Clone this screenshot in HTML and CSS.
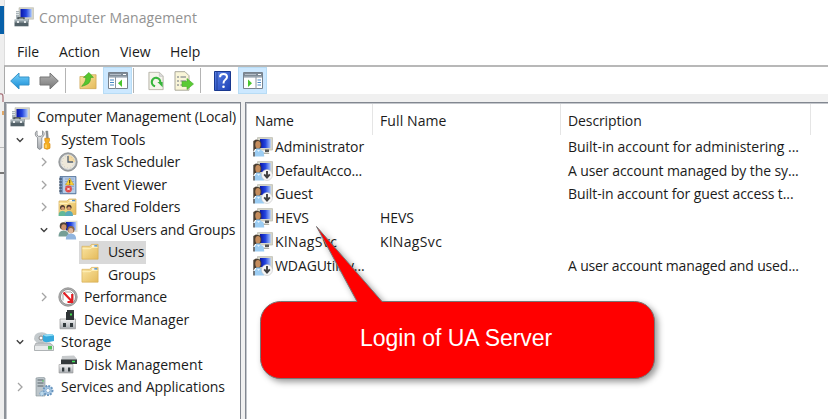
FILE: index.html
```html
<!DOCTYPE html>
<html lang="en">
<head>
<meta charset="utf-8">
<title>Computer Management</title>
<link rel="stylesheet" href="styles.css">
</head>
<body>
<svg class="defs" width="0" height="0">
  <defs>
    <linearGradient id="screen" x1="0" x2="1"><stop offset="0" stop-color="#0915a8"/><stop offset=".5" stop-color="#2345de"/><stop offset="1" stop-color="#a9c6ff"/></linearGradient>
    <linearGradient id="gold" x1="0" y1="0" x2="1" y2="1"><stop offset="0" stop-color="#fbe6a4"/><stop offset="1" stop-color="#e5bb5b"/></linearGradient>
    <linearGradient id="blueArrow" x1="0" y1="0" x2="0" y2="1"><stop offset="0" stop-color="#77d2fb"/><stop offset="1" stop-color="#168bd5"/></linearGradient>
    <linearGradient id="grayArrow" x1="0" y1="0" x2="0" y2="1"><stop offset="0" stop-color="#b5b5b5"/><stop offset="1" stop-color="#777"/></linearGradient>
    <linearGradient id="metal" x1="0" y1="0" x2="0" y2="1"><stop offset="0" stop-color="#f5f5f5"/><stop offset="1" stop-color="#a7abb0"/></linearGradient>
    <linearGradient id="help" x1="0" y1="0" x2="1" y2="1"><stop offset="0" stop-color="#5c83e8"/><stop offset="1" stop-color="#1c3fb4"/></linearGradient>
  </defs>
  <symbol id="computer" viewBox="0 0 20 20">
    <path d="M5 .7h14.5v11.5H5z" fill="#d5d5c9" stroke="#b8b8ae" stroke-width=".6"/>
    <path d="M6.5 2h11.2v8.3H6.5z" fill="url(#screen)"/>
    <path d="M2 4h3.7v8H2z" fill="#a9b3b8"/><path d="M2 5.5h3M2 7.5h3" stroke="#eff3f4" stroke-width=".8"/>
    <path d="M10 12h5v3h-5z" fill="#aaa"/>
    <path d="M4 12.8v-2h6v2" fill="none" stroke="#3d4649" stroke-width="1.3"/>
    <path d="M.5 12.5h14v3H.5z" fill="#8c999e"/><path d="M.5 15.3h14v4H.5z" fill="#526168"/>
    <path d="M1 13h13" stroke="#c6d0d3"/><path d="M3 15h2M10 15h2" stroke="#e6eaec" stroke-width="2"/>
  </symbol>
  <symbol id="user" viewBox="0 0 20 20">
    <path d="M4.500.6h15V13h-15z" fill="#d7d7ca" stroke="#b7b7ad" stroke-width=".7"/>
    <path d="M7 2h10.700v9H7z" fill="url(#screen)"/>
    <path d="M12 12.500h4v2.500h-4z" fill="#555"/><path d="M10 15.500h5.500l1 1.500H10z" fill="#b0b0a6"/>
    <path d="M.3 4 3 2.500 7 3.500 8.300 6v4l-1.500 2H2L.3 15z" fill="#4a3e31"/>
    <ellipse cx="4.900" cy="7.800" rx="2.600" ry="3.700" fill="#c58d5d"/>
    <path d="M3 11.500h4l1 1.600 2.500 1.300.8 5.100H1.500l.2-5L3 13z" fill="#9ccdf3"/><path d="m4 13 1.600 2L7 13" fill="#e5f5ff"/><path d="M.3 15h1.400v4.500H.3z" fill="#3e4144"/>
  </symbol>
  <symbol id="disabled" viewBox="0 0 20 20">
    <use href="#user"/>
    <circle cx="14" cy="14" r="5.5" fill="#f7f7f7" stroke="#bbb" stroke-width=".5"/>
    <path d="M14 10v6M11.200 13.400l2.800 3.200 2.800-3.200" fill="none" stroke="#3f3f3f" stroke-width="1.900"/>
  </symbol>
  <symbol id="folder" viewBox="0 0 20 20">
    <path d="M1 4h8l2-2h7v15.500H1z" fill="url(#gold)" stroke="#d6ae55" stroke-width=".7"/>
    <path d="M11.500 3h5v1.500h-5z" fill="#fff"/><path d="M14 2.800h3v1.500h-3z" fill="#4b91d1"/>
    <path d="M1.500 6.500h8l2-1.300h6" stroke="#fff1bb" fill="none"/>
  </symbol>
  <symbol id="tools" viewBox="0 0 20 20">
    <path d="M3 .9C.8 2 .4 5.800 3.600 7.600V18q2 2.800 4.200 0V7.600C11 5.800 10.600 2 8.500.9v4L7.200 6.300H4.300L3 5z" fill="url(#metal)" stroke="#85898d" stroke-width=".9"/>
    <path d="M11.800 1h2l.6 7.500h-2z" fill="#8b8f91" stroke="#707476" stroke-width=".4"/><path d="M10.800 8.300h4.700v2.500l-1 1.700 1.500 1.200v4.500q-3 2.200-5.800 0v-4.500l1.500-1.200-.9-1.700z" fill="#f6ae20" stroke="#d58a16" stroke-width=".7"/><path d="M12 14.500v3.500" stroke="#fff0a0"/>
  </symbol>
  <symbol id="clock" viewBox="0 0 20 20">
    <circle cx="10" cy="10" r="9.200" fill="#a1a4a6" stroke="#85898b" stroke-width=".8"/><circle cx="10" cy="10" r="7.200" fill="#eee8d9" stroke="#dfe2e2"/>
    <path d="M10 10V3a7 7 0 0 1 7 7z" fill="#f4d9a0"/><path d="M10 4v6h5" fill="none" stroke="#536273" stroke-width="1.300"/>
    <circle cx="10" cy="10" r="5.800" fill="none" stroke="#9aa2a5" stroke-width=".7" stroke-dasharray=".5 2.500"/>
  </symbol>
  <symbol id="event" viewBox="0 0 20 20">
    <path d="M2 1.500h16v17.300H2z" fill="#7897c0" stroke="#45678f" stroke-width=".7"/><path d="M5 2.200h12.300v15.800H5z" fill="#b8cde7"/>
    <path d="M7 4h9M7 6.500h9M7 9h9M7 11.500h9M7 14h9" stroke="#7e9ac2" stroke-width=".7"/><path d="M1 4h3M1 7h3M1 10h3M1 13h3M1 16h3" stroke="#39475b"/>
    <path d="m11.700 3 4.200 7H7.500z" fill="#ffd433" stroke="#bc9120" stroke-width=".5"/><path d="M11.700 5v3M11.700 8.500v1" stroke="#473b16"/>
    <circle cx="10.500" cy="14" r="3.400" fill="#df4a4a"/><path d="m9.300 12.800 2.400 2.400m0-2.400-2.400 2.400" stroke="#fff" stroke-width="1"/>
  </symbol>
  <symbol id="shared" viewBox="0 0 20 20">
    <use href="#folder"/><circle cx="4.500" cy="10.500" r="2.500" fill="#523c30"/><circle cx="4.800" cy="11.500" r="1.700" fill="#d09b72"/><path d="M.5 19q0-5 4-5t4 5z" fill="#62b899"/>
    <circle cx="11" cy="10.200" r="2.500" fill="#45342d"/><circle cx="11" cy="11.200" r="1.700" fill="#d69a70"/><path d="M7 19q0-5 4-5t4 5z" fill="#5aaabb"/>
  </symbol>
  <symbol id="groups" viewBox="0 0 20 20">
    <path d="M6.500.7h13V12h-13z" fill="#deded2"/><path d="M8 2h10v8.300H8z" fill="url(#screen)"/>
    <circle cx="5.500" cy="6" r="3.800" fill="#51443a"/><ellipse cx="5.800" cy="7.300" rx="2.500" ry="3" fill="#cf936b"/><path d="M.5 16.500q0-6 5-6t6 6z" fill="#759e96"/>
    <circle cx="13" cy="9.500" r="3.500" fill="#8b6545"/><ellipse cx="12.800" cy="10.700" rx="2.400" ry="2.800" fill="#dfb699"/><path d="M7.800 19.500q0-6 5.200-6t5.200 6z" fill="#91b5df"/>
  </symbol>
  <symbol id="performance" viewBox="0 0 20 20">
    <circle cx="10" cy="10" r="9.200" fill="#b0b0b0" stroke="#858585" stroke-width=".8"/><circle cx="10" cy="10" r="7.500" fill="#fff" stroke="#777" stroke-width=".7"/>
    <path d="M5 13.500V7l2-2h6l2 2v6.500" fill="none" stroke="#888" stroke-width=".8"/><path d="m5.500 5.500 8.500 9M14.200 7v8H9.500" fill="none" stroke="#e31d22" stroke-width="2.100"/>
  </symbol>
  <symbol id="device" viewBox="0 0 20 20">
    <path d="M9 0h7v12H9z" fill="#34393b"/><path d="M2 9h15.500v9.800H2z" fill="url(#metal)" stroke="#999" stroke-width=".7"/><path d="M8 2h8v8H8z" fill="#303537"/><path d="M12 3.500h2v2h-2z" fill="#40d84d"/><path d="M5 13h3v4H5zm7 0h3v4h-3z" fill="#333b3e"/>
  </symbol>
  <symbol id="storage" viewBox="0 0 20 20">
    <path d="M0 7q0-7 8-6.800Q14 .4 14 6q0 5-7 5.300Q1 11 0 7z" fill="#c3c9cc"/><circle cx="7" cy="6" r="2" fill="#fff" stroke="#888"/><path d="m9 3 9-1 2 1.500V9l-8 1.500-3-1.500z" fill="#36a9dc"/><path d="m9 3 9-1 2 1.500-8 1z" fill="#92ddf5"/>
    <path d="M2 11h14l3.500 3v4.500H.5V14z" fill="#c7cacc" stroke="#989da0" stroke-width=".7"/><path d="M1 14h18v4H1z" fill="#e8eaeb"/><path d="M14 14h4v3.500h-4z" fill="#53c35b"/>
  </symbol>
  <symbol id="disk" viewBox="0 0 20 20">
    <path d="m4 1 12-.5L19 4v4H3z" fill="#c7cacc"/><path d="M3 4.500h16V9H3z" fill="#33383a"/><path d="M14 6.500h3" stroke="#43e159" stroke-width="1.500"/><path d="M1 9.500h14V18H1z" fill="url(#metal)" stroke="#999" stroke-width=".6"/><path d="M4 12.500h2.300v4H4zm6 0h2.300v4H10z" fill="#333b3e"/>
  </symbol>
  <symbol id="services" viewBox="0 0 20 20">
    <path d="M2 1 8 0l3 1v18H2z" fill="#bcc5ca" stroke="#849096" stroke-width=".6"/><path d="M3.500 3h6M3.500 6h6M3.500 9h6" stroke="#59656b"/><path d="M8 4h2" stroke="#59c965"/>
    <circle cx="14" cy="13.500" r="4.500" fill="#a9c9e6" stroke="#6895be" stroke-width="2" stroke-dasharray="1.800 1.200"/><circle cx="14" cy="13.500" r="2" fill="#fff" stroke="#6895be" stroke-width=".6"/><circle cx="8" cy="16.500" r="2.200" fill="#bcd9eb" stroke="#6895be" stroke-dasharray="1 1"/>
  </symbol>
  <symbol id="panel" viewBox="0 0 20 17">
    <path d="M.5.5h19v16H.5z" fill="#fff" stroke="#78828d"/><path d="M1 1h18v4.500H1z" fill="#7f8b97"/><path d="M2 2.500h11M1 5h18" stroke="#c3ccd4" stroke-width=".8"/><path d="M15 2.500h3" stroke="#fff"/>
  </symbol>
  <symbol id="doc" viewBox="0 0 18 20">
    <path d="M1 .7h11l4 4v14.500H1z" fill="#f4f4ea" stroke="#aaa89b" stroke-width=".9"/><path d="M12 1v4h4" fill="#ddd" stroke="#bbb" stroke-width=".7"/>
  </symbol>
  <symbol id="right" viewBox="0 0 8 10"><path d="m2 1 4 4-4 4" fill="none" stroke="#a4a4a4" stroke-width="1.300"/></symbol>
  <symbol id="down" viewBox="0 0 8 10"><path d="m.8 3.200 3.200 3.200 3.200-3.200" fill="none" stroke="#404040" stroke-width="1.400"/></symbol>
</svg>

<div class="desktop">
  <div class="behind">
    <div class="blue"></div>
    <svg class="fragment" viewBox="0 0 4 113"><path d="M0 60q3-1 3 3v5" fill="none" stroke="#a46d75" stroke-width="1.200"/><path d="M2 77h2v4H2z" fill="#e0a868"/></svg>
    <div class="rule"></div><div class="rule dark"></div>
  </div>
  <div class="window">
    <header class="titlebar"><svg><use href="#computer"/></svg><span>Computer Management</span></header>
    <nav class="menu"><span class="file">File</span><span class="action">Action</span><span class="view">View</span><span>Help</span></nav>
    <div class="toolbar">
      <svg class="arrow" viewBox="0 0 20 18"><path d="M.7 9 9 1v4h10v8H9v4z" fill="url(#blueArrow)" stroke="#3793c8"/></svg>
      <svg class="arrow next" viewBox="0 0 20 18"><path d="M19.300 9 11 1v4H1v8h10v4z" fill="url(#grayArrow)" stroke="#777"/></svg>
      <i class="sep first"></i>
      <svg class="up" viewBox="0 0 20 20"><path d="M1 5h7l2-2h9v15.500H1z" fill="url(#gold)" stroke="#c99e48" stroke-width=".7"/><path d="M3 16C4.500 13 7.500 12 7.500 6H5L11 .5 16 6h-3.200c.4 7-4 8-9.800 10z" fill="#57c62e" stroke="#329b20" stroke-width=".6"/></svg>
      <div class="toggle"><svg class="pane-icon" viewBox="0 0 20 17"><use href="#panel"/><path d="M7.500 5v12" stroke="#8995a0"/><path d="M2 8h4M2 10.500h4M2 13h4" stroke="#4687c4"/><path d="m14 7.500-4 3.800 4 3.800z" fill="#4ac52e"/></svg></div>
      <i class="sep second"></i>
      <svg class="doc" viewBox="0 0 18 20"><use href="#doc"/><path d="M7.500 15.500A4.500 4.500 0 1 1 13 11.500" fill="none" stroke="#36b53b" stroke-width="2.300"/><path d="M10 11h5.500v5.500z" fill="#36b53b"/></svg>
      <svg class="export" viewBox="0 0 20 20"><path d="M1 .7h10l4 4v14.500H1z" fill="#f9f5d8" stroke="#aaa89b"/><path d="M3 6h2M3 10h2M3 14h2M6.500 6H12M6.500 10H12M6.500 14H12" stroke="#69717e"/><path d="M8 10.500h5V7.500l6.500 5.500-6.500 5.500v-3H8z" fill="#5acb35" stroke="#46a82c" stroke-width=".6"/></svg>
      <i class="sep third"></i>
      <svg class="help" viewBox="0 0 17 20"><path d="M.5.5h16v19H.5z" fill="url(#help)" stroke="#19388f"/><path d="M3 1v18" stroke="#204099"/><path d="M6 6.200q0-3.200 3.500-3.200t3.500 3q0 1.600-2 3-1.500 1-1.500 3.500" fill="none" stroke="#fff" stroke-width="2"/><circle cx="9.500" cy="15.700" r="1.300" fill="#fff"/></svg>
      <div class="toggle last"><svg class="pane-icon" viewBox="0 0 20 17"><use href="#panel"/><path d="M13 5v12" stroke="#8995a0"/><path d="M14.500 8H18M14.500 10.500H18M14.500 13H18" stroke="#4687c4"/><path d="m5 7.500 4 3.800-4 3.800z" fill="#4ac52e"/></svg></div>
    </div>
    <main class="panes">
      <section class="tree">
        <div class="node root"><svg class="icon"><use href="#computer"/></svg><span>Computer Management (Local)</span></div>
        <div class="node l1"><svg class="chev"><use href="#down"/></svg><svg class="icon"><use href="#tools"/></svg><span>System Tools</span></div>
        <div class="node l2"><svg class="chev"><use href="#right"/></svg><svg class="icon"><use href="#clock"/></svg><span class="snug">Task Scheduler</span></div>
        <div class="node l2"><svg class="chev"><use href="#right"/></svg><svg class="icon"><use href="#event"/></svg><span>Event Viewer</span></div>
        <div class="node l2"><svg class="chev"><use href="#right"/></svg><svg class="icon"><use href="#shared"/></svg><span>Shared Folders</span></div>
        <div class="node l2"><svg class="chev"><use href="#down"/></svg><svg class="icon"><use href="#groups"/></svg><span class="snug">Local Users and Groups</span></div>
        <div class="node l3 selected"><svg class="icon"><use href="#folder"/></svg><span class="snug">Users</span></div>
        <div class="node l3"><svg class="icon"><use href="#folder"/></svg><span>Groups</span></div>
        <div class="node l2"><svg class="chev"><use href="#right"/></svg><svg class="icon"><use href="#performance"/></svg><span class="snug">Performance</span></div>
        <div class="node l2"><i class="chev"></i><svg class="icon"><use href="#device"/></svg><span class="wide">Device Manager</span></div>
        <div class="node l1"><svg class="chev"><use href="#down"/></svg><svg class="icon"><use href="#storage"/></svg><span class="wide">Storage</span></div>
        <div class="node l2"><i class="chev"></i><svg class="icon"><use href="#disk"/></svg><span class="wide">Disk Management</span></div>
        <div class="node l1"><svg class="chev"><use href="#right"/></svg><svg class="icon"><use href="#services"/></svg><span class="apps">Services and Applications</span></div>
      </section>
      <section class="list">
        <div class="head"><span>Name</span><span class="fullname">Full Name</span><span>Description</span></div>
        <div class="row"><span><svg><use href="#user"/></svg>Administrator</span><span></span><span class="apps">Built-in account for administering ...</span></div>
        <div class="row"><span class="snug"><svg><use href="#disabled"/></svg>DefaultAcco...</span><span></span><span>A user account managed by the sy...</span></div>
        <div class="row"><span><svg><use href="#disabled"/></svg>Guest</span><span></span><span>Built-in account for guest access t...</span></div>
        <div class="row"><span><svg><use href="#user"/></svg>HEVS</span><span>HEVS</span><span></span></div>
        <div class="row"><span class="service"><svg><use href="#user"/></svg>KlNagSvc</span><span class="service">KlNagSvc</span><span></span></div>
        <div class="row"><span><svg><use href="#disabled"/></svg>WDAGUtility...</span><span></span><span class="snug">A user account managed and used...</span></div>
      </section>
    </main>
  </div>
  <div class="callout">
    <svg viewBox="0 0 420 180"><path d="M66.500 6.500 132 81.500H384.500a20 20 0 0 1 20 20v37a20 20 0 0 1-20 20H30.500a20 20 0 0 1-20-20v-37a20 20 0 0 1 20-20H107z" fill="#f00" stroke="#777" stroke-width="1"/></svg>
    <span>Login of UA Server</span>
  </div>
</div>
</body>
</html>
```
FILE: styles.css
```css
* { box-sizing: border-box; }
body { margin: 0; width: 828px; height: 419px; overflow: hidden; background: #fff; color: #1b1b1b; font: 14px/20px "Open Sans", sans-serif; }
.defs { position: absolute; }
.desktop { position: relative; display: flex; width: 828px; height: 419px; }
.behind { width: 4px; height: 419px; background: #eee; padding-top: 6px; overflow: hidden; }
.blue { height: 28px; background: #0860a9; }
.fragment { display: block; width: 4px; height: 113px; }
.rule { height: 25px; border-top: 1px solid #bbb; }
.rule.dark { border-top: 2px solid #777; }
.window { width: 824px; height: 419px; background: #f0f0f0; }
.titlebar { display: flex; height: 37px; background: #fff; border-left: 1px solid #ddd; padding: 7px 0 0 9px; color: #929292; white-space: nowrap; }
.titlebar svg { width: 20px; height: 20px; margin-right: 5px; }
.titlebar span { line-height: 21px; letter-spacing: .1px; }
.menu { display: flex; height: 28px; padding: 5px 0 0 12px; background: #fff; border-left: 1px solid #ddd; white-space: nowrap; }
.menu .file { width: 42px; }
.menu .action { width: 61px; }
.menu .view { width: 50px; }
.toolbar { display: flex; align-items: center; height: 29px; background: #fff; border-top: 2px solid #b8b8b8; border-left: 1px solid #aaa; padding-left: 5px; }
.toolbar svg { flex: none; }
.arrow { width: 20px; height: 18px; }
.next { margin-left: 9px; }
.sep { width: 1px; height: 25px; background: #b4b4b4; }
.first { margin: 0 13px 0 6px; }
.up { width: 18px; height: 20px; }
.toggle { width: 29px; height: 27px; margin-left: 6px; display: flex; align-items: center; justify-content: center; background: #cce8ff; border: 1px solid #b7dcf5; }
.pane-icon { width: 20px; height: 17px; }
.second { margin: 0 14px 0 1px; }
.doc { width: 17px; height: 20px; }
.export { width: 20px; height: 20px; margin-left: 9px; }
.third { margin: 0 13px 0 6px; }
.help { width: 17px; height: 20px; }
.last { margin-left: 7px; }
.panes { display: grid; grid-template-columns: 237px 583px; gap: 4px; height: 325px; padding-top: 8px; }
.tree, .list { background: #fff; border: 1px solid #828790; border-bottom: 0; box-shadow: inset 1px 1px #c4c7cc; }
.tree { border-left: 2px solid #8d9299; padding-top: 3px; }
.node { display: flex; align-items: center; height: 22.5px; white-space: nowrap; }
.node span { line-height: 20px; letter-spacing: -.1px; }
.node .snug { letter-spacing: -.16px; }
.node .wide { letter-spacing: .05px; }
.node .apps { letter-spacing: -.04px; }
.root { padding-left: 4px; }
.icon { width: 20px; height: 20px; flex: none; margin-right: 7px; }
.chev { width: 8px; height: 10px; flex: none; margin-right: 9px; }
.l1 { padding-left: 10px; }
.l1 .icon { margin-left: 1px; }
.l2 { padding-left: 34px; }
.l2 .chev { margin-right: 10px; }
.l2 .icon { margin-right: 6px; }
.l3 { width: 67px; margin-left: 73px; padding-left: 2px; }
.l3 .icon { width: 19px; margin-right: 8px; }
.selected { background: #d9d9d9; }
.list { border-right: 0; padding-top: 1px; }
.head { display: grid; grid-template-columns: 127px 188px 250px; height: 31px; }
.head span { border-right: 1px solid #e5e5e5; padding: 7px 0 0 7px; letter-spacing: -.1px; }
.head span:first-child { padding-left: 9px; }
.head .fullname { letter-spacing: .1px; }
.row { display: grid; grid-template-columns: 127px 188px 260px; height: 23.8px; align-items: center; white-space: nowrap; }
.row > span { display: flex; align-items: center; padding-left: 7px; letter-spacing: -.1px; }
.row > .snug { letter-spacing: -.17px; }
.row > .apps { letter-spacing: -.04px; }
.row > .service { letter-spacing: .35px; }
.row svg { width: 20px; height: 20px; margin-right: 2px; }
.callout { position: absolute; left: 250px; top: 220px; width: 420px; height: 180px; }
.callout svg { width: 420px; height: 180px; filter: drop-shadow(3px 3px 3px rgba(0,0,0,.4)); }
.callout span { position: absolute; left: 110px; top: 106px; color: #fff; font: 23px/24px "Liberation Sans", sans-serif; white-space: nowrap; letter-spacing: -.05px; }
```
